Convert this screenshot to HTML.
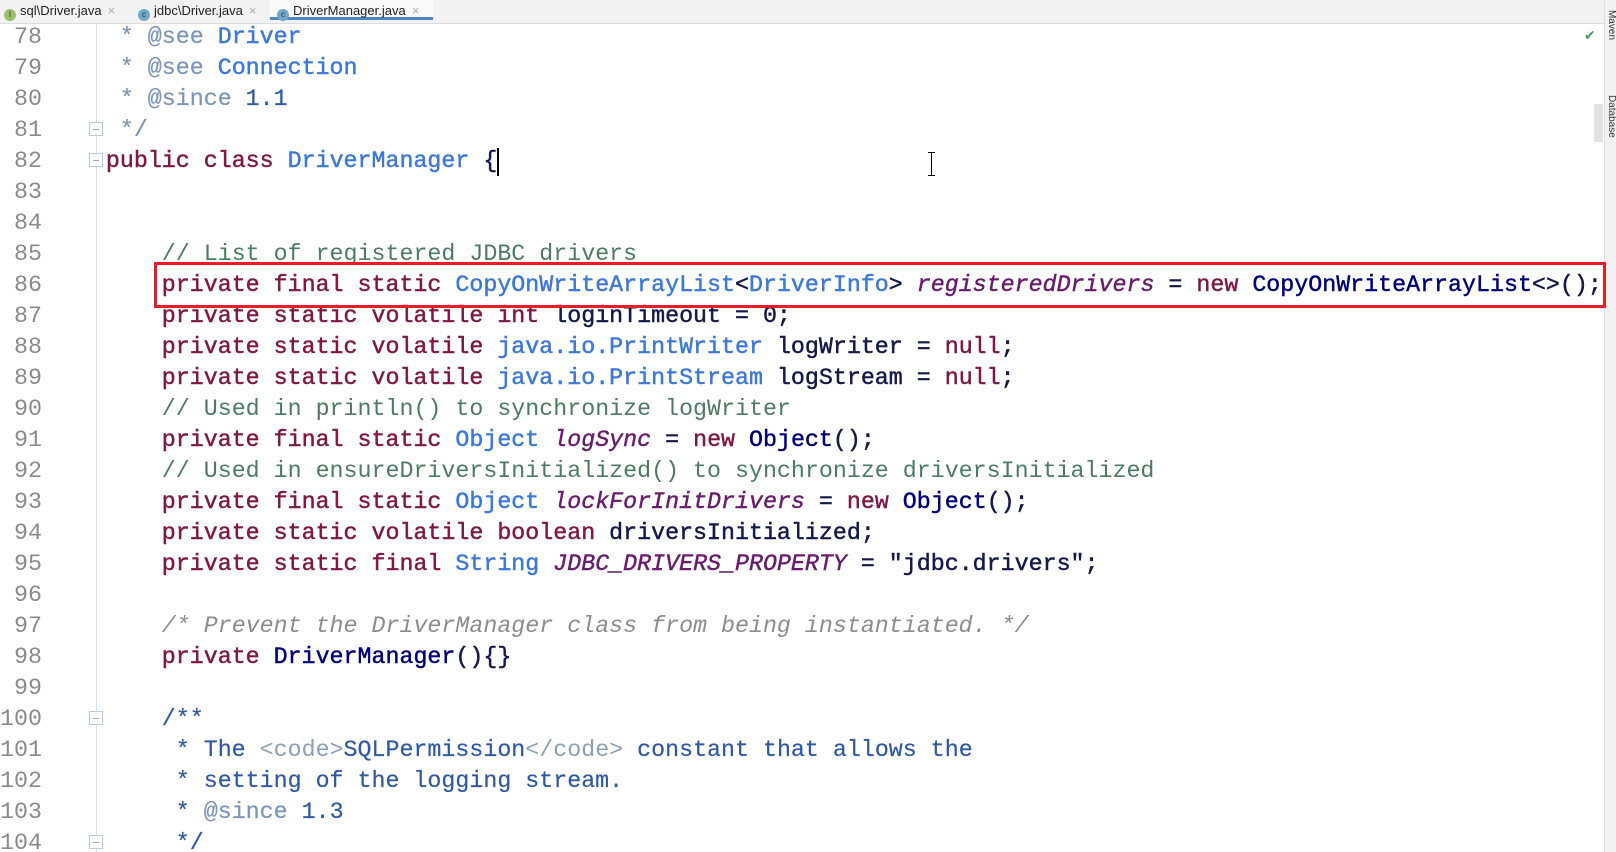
<!DOCTYPE html>
<html><head><meta charset="utf-8"><style>
html,body{margin:0;padding:0;width:1616px;height:852px;overflow:hidden;background:#fff;position:relative;font-family:"Liberation Mono",monospace;}
.tabs{position:absolute;left:0;top:0;width:1604px;height:23px;background:#f2f2f2;border-bottom:1px solid #dcdcdc;font-family:"Liberation Sans",sans-serif;font-size:13px;color:#222;}
.tab{position:absolute;top:0;height:23px;line-height:21px;}
.tab .ic{display:inline-block;width:12px;height:12px;border-radius:6px;background:#6fa8c8;vertical-align:-2px;margin-right:4px;font-size:8px;line-height:12px;text-align:center;color:#234}
.tab .x{color:#aaa;margin-left:6px}
.active{background:#fafafa;border-bottom:3px solid #4a86c8;height:20px}
.side{position:absolute;left:1604px;top:0;width:12px;height:852px;background:#f2f2f2;border-left:1px solid #ddd;}
.vt{position:absolute;left:1px;font-family:"Liberation Sans",sans-serif;font-size:10px;writing-mode:vertical-rl;color:#333}
.code{position:absolute;left:8px;top:22px;font-size:23.3px;line-height:31px;white-space:pre;font-weight:normal;-webkit-text-stroke:0.45px currentColor;}
.ln{position:absolute;left:0;top:22px;width:42px;text-align:right;font-size:23.3px;line-height:31px;color:#8a8a8a;white-space:pre;}
.gut{position:absolute;left:96px;top:24px;width:1px;height:828px;background:#d6e2ee}
.k{color:#7d1845}.c{color:#3c78d8}.t{color:#14184a}.m{color:#00007a}
.f{color:#6a1b6e;font-style:italic}
.lc{color:#4c7a62;-webkit-text-stroke:0}
.bc{color:#8c8c8c;font-style:italic;-webkit-text-stroke:0}
.dc{color:#2f58a3;-webkit-text-stroke:0.2px #2f58a3}.dt{color:#8aa0b8;-webkit-text-stroke:0}.dh{color:#7b94b8;-webkit-text-stroke:0.2px #7b94b8}
.d{color:#3c78d8}
.box{position:absolute;left:154px;top:262px;width:1446px;height:40px;border:3px solid #ea1c28}
.fold{position:absolute;left:89px;width:14px;height:14px;border:1px solid #b8cbe0;background:#fff;box-sizing:border-box}
.fold:after{content:"";position:absolute;left:3px;top:6px;width:6px;height:1px;background:#9ab}
</style></head><body>
<div class="tabs">
<div class="tab" style="left:4px"><span class="ic" style="background:#9bbf6a">I</span>sql\Driver.java<span class="x">×</span></div>
<div class="tab" style="left:138px"><span class="ic">c</span>jdbc\Driver.java<span class="x">×</span></div>
<div class="tab active" style="left:270px;width:163px;padding-left:7px;box-sizing:border-box"><span class="ic">c</span>DriverManager.java<span class="x">×</span></div>
</div>
<div class="side"><div class="vt" style="top:10px">Maven</div><div class="vt" style="top:95px">Database</div></div>
<div style="position:absolute;left:1594px;top:104px;width:9px;height:38px;background:#e2e2e2"></div>
<div style="position:absolute;left:1584px;top:28px;color:#4c9a5a;font-size:14px;font-family:'DejaVu Sans'">✔</div>
<div class="gut"></div>
<div class="fold" style="top:122px"></div>
<div class="fold" style="top:153px"></div>
<div class="fold" style="top:711px"></div>
<div class="fold" style="top:835px"></div>
<div class="ln">78
79
80
81
82
83
84
85
86
87
88
89
90
91
92
93
94
95
96
97
98
99
100
101
102
103
104</div>
<div class="code"><span class="dh">        * @see </span><span class="d">Driver</span>
<span class="dh">        * @see </span><span class="d">Connection</span>
<span class="dh">        * @since </span><span class="dc">1.1</span>
<span class="dh">        */</span>
       <span class="k">public class </span><span class="c">DriverManager</span> <span class="t">{</span>


           <span class="lc">// List of registered JDBC drivers</span>
           <span class="k">private final static </span><span class="c">CopyOnWriteArrayList</span><span class="t">&lt;</span><span class="c">DriverInfo</span><span class="t">&gt; </span><span class="f">registeredDrivers</span><span class="t"> = </span><span class="k">new </span><span class="m">CopyOnWriteArrayList</span><span class="t">&lt;&gt;();</span>
           <span class="k">private static volatile int </span><span class="t">loginTimeout = 0;</span>
           <span class="k">private static volatile </span><span class="c">java.io.PrintWriter</span><span class="t"> logWriter = </span><span class="k">null</span><span class="t">;</span>
           <span class="k">private static volatile </span><span class="c">java.io.PrintStream</span><span class="t"> logStream = </span><span class="k">null</span><span class="t">;</span>
           <span class="lc">// Used in println() to synchronize logWriter</span>
           <span class="k">private final static </span><span class="c">Object</span> <span class="f">logSync</span><span class="t"> = </span><span class="k">new </span><span class="m">Object</span><span class="t">();</span>
           <span class="lc">// Used in ensureDriversInitialized() to synchronize driversInitialized</span>
           <span class="k">private final static </span><span class="c">Object</span> <span class="f">lockForInitDrivers</span><span class="t"> = </span><span class="k">new </span><span class="m">Object</span><span class="t">();</span>
           <span class="k">private static volatile boolean </span><span class="t">driversInitialized;</span>
           <span class="k">private static final </span><span class="c">String</span> <span class="f">JDBC_DRIVERS_PROPERTY</span><span class="t"> = "jdbc.drivers";</span>

           <span class="bc">/* Prevent the DriverManager class from being instantiated. */</span>
           <span class="k">private </span><span class="m">DriverManager</span><span class="t">(){}</span>

           <span class="dc">/**</span>
<span class="dc">            * The </span><span class="dt">&lt;code&gt;</span><span class="dc">SQLPermission</span><span class="dt">&lt;/code&gt;</span><span class="dc"> constant that allows the</span>
<span class="dc">            * setting of the logging stream.</span>
<span class="dc">            * </span><span class="dh">@since</span><span class="dc"> 1.3</span>
<span class="dc">            */</span></div>
<div class="box"></div>
<div style="position:absolute;left:497px;top:148px;width:2px;height:28px;background:#000"></div>
<div style="position:absolute;left:931px;top:152px;width:1px;height:24px;background:#000"></div>
<div style="position:absolute;left:928px;top:152px;width:7px;height:1px;background:#000"></div>
<div style="position:absolute;left:928px;top:175px;width:7px;height:1px;background:#000"></div>
</body></html>
